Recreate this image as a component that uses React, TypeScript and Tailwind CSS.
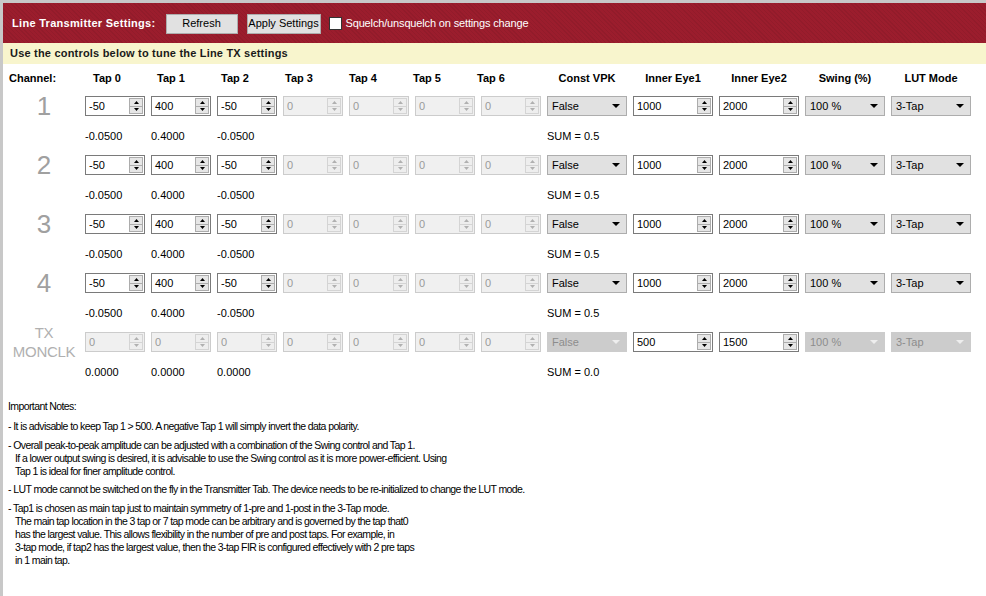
import React from "react";

const F = "font-['Liberation_Sans',Arial,sans-serif]";

function SpinArrows({ disabled }: { disabled?: boolean }) {
  const fill = disabled ? "#b0b0b0" : "#000000";
  return (
    <div
      className={`mr-[1px] w-[14px] h-[16px] flex flex-col border ${
        disabled ? "border-[#d4d4d4] bg-[#eeeeee]" : "border-[#acacac] bg-[#e6e6e6]"
      }`}
    >
      <div className="flex-1 flex items-center justify-center">
        <svg width="5" height="3" viewBox="0 0 5 3">
          <polygon points="2.5,0 5,3 0,3" fill={fill} />
        </svg>
      </div>
      <div className={`h-px ${disabled ? "bg-[#d4d4d4]" : "bg-[#acacac]"}`} />
      <div className="flex-1 flex items-center justify-center">
        <svg width="5" height="3" viewBox="0 0 5 3">
          <polygon points="0,0 5,0 2.5,3" fill={fill} />
        </svg>
      </div>
    </div>
  );
}

function Spin({ v, disabled, wide }: { v: string; disabled?: boolean; wide?: boolean }) {
  return (
    <div
      className={`${wide ? "w-[80px]" : "w-[60px]"} h-5 flex items-center border ${
        disabled ? "border-[#cccccc] bg-[#f0f0f0] text-[#9a9a9a]" : "border-[#7a7a7a] bg-white text-black"
      }`}
    >
      <span className="flex-1 pl-[3px] text-[11px] leading-none">{v}</span>
      <SpinArrows disabled={disabled} />
    </div>
  );
}

function Combo({ v, disabled }: { v: string; disabled?: boolean }) {
  return (
    <div
      className={`w-[80px] h-5 flex items-center justify-between border pl-[4px] pr-[6px] ${
        disabled ? "border-[#cccccc] bg-[#cccccc] text-[#8c8c8c]" : "border-[#adadad] bg-[#e1e1e1] text-black"
      }`}
    >
      <span className="text-[11px] leading-none">{v}</span>
      <svg width="8" height="4" viewBox="0 0 8 4">
        <polygon points="0,0 8,0 4,4" fill={disabled ? "#eeeeee" : "#000000"} />
      </svg>
    </div>
  );
}

type Ch = {
  label: React.ReactNode;
  taps: string[];
  enabledTaps: number;
  vpkDisabled?: boolean;
  eye1: string;
  eye2: string;
  values: string[];
  sum: string;
};

function Channel({ c }: { c: Ch }) {
  return (
    <div>
      <div className="flex h-5 items-center">
        <div className="w-[82px] h-5 flex items-center justify-center">{c.label}</div>
        <div className="flex gap-[6px]">
          {c.taps.map((t, i) => (
            <Spin key={i} v={t} disabled={i >= c.enabledTaps} />
          ))}
          <Combo v="False" disabled={c.vpkDisabled} />
          <Spin v={c.eye1} wide />
          <Spin v={c.eye2} wide />
          <Combo v="100 %" disabled={c.vpkDisabled} />
          <Combo v="3-Tap" disabled={c.vpkDisabled} />
        </div>
      </div>
      <div className="flex h-[39px] pt-[14px] pl-[82px] text-[11px] leading-[13px] text-black">
        {[0, 1, 2, 3, 4, 5, 6].map((i) => (
          <div key={i} className="w-[66px]">
            {c.values[i] ?? ""}
          </div>
        ))}
        <div>{c.sum}</div>
      </div>
    </div>
  );
}

const bigNum = (n: string) => (
  <span className="text-[26px] leading-5 text-[#a0a0a0]">{n}</span>
);

const channels: Ch[] = ["1", "2", "3", "4"].map((n) => ({
  label: bigNum(n),
  taps: ["-50", "400", "-50", "0", "0", "0", "0"],
  enabledTaps: 3,
  eye1: "1000",
  eye2: "2000",
  values: ["-0.0500", "0.4000", "-0.0500"],
  sum: "SUM = 0.5",
}));

channels.push({
  label: (
    <div className="flex flex-col items-center text-[15px] leading-[19px] text-[#b0b0b0] tracking-[-0.3px]">
      <span>TX</span>
      <span>MONCLK</span>
    </div>
  ),
  taps: ["0", "0", "0", "0", "0", "0", "0"],
  enabledTaps: 0,
  vpkDisabled: true,
  eye1: "500",
  eye2: "1500",
  values: ["0.0000", "0.0000", "0.0000"],
  sum: "SUM = 0.0",
});

const tapHeads = ["Tap 0", "Tap 1", "Tap 2", "Tap 3", "Tap 4", "Tap 5", "Tap 6"];
const rightHeads = ["Const VPK", "Inner Eye1", "Inner Eye2", "Swing (%)", "LUT Mode"];

export default function App() {
  return (
    <div className={`${F} w-[986px] h-[596px] bg-[#c8c8c8] pt-[3px] pl-[3px] overflow-hidden`}>
      <div className="w-full h-full bg-white">
        {/* Red header */}
        <div className="h-[40px] bg-[#9b1d2d] bg-[repeating-linear-gradient(45deg,rgba(0,0,0,0.06)_0px,rgba(0,0,0,0.06)_1px,transparent_1px,transparent_3px)] flex items-center pl-[9px] pt-[1px]">
          <span className="text-white font-bold text-[11px] tracking-[0.3px] mr-[10px]">Line Transmitter Settings:</span>
          <button className="w-[72px] h-5 bg-[#e1e1e1] border border-[#adadad] text-[11px] text-black leading-none mr-[9px]">
            Refresh
          </button>
          <button className="w-[74px] h-5 bg-[#e1e1e1] border border-[#adadad] text-[11px] text-black leading-none mr-[8px] whitespace-nowrap">
            Apply Settings
          </button>
          <span className="w-[13px] h-[13px] bg-white border border-[#333333] mr-[4px]" />
          <span className="text-white text-[11px] tracking-[-0.15px]">Squelch/unsquelch on settings change</span>
        </div>
        {/* Yellow bar */}
        <div className="h-[21px] bg-[#f8f5cd] flex items-center pl-[7px]">
          <span className="font-bold text-[11px] tracking-[0.2px] text-[#1a1a1a]">
            Use the controls below to tune the Line TX settings
          </span>
        </div>
        {/* Column heads */}
        <div className="h-[32px] flex pt-[7px] text-[11px] leading-[14px] font-bold text-black">
          <div className="w-[72px] pl-[6px]">Channel:</div>
          {tapHeads.map((h) => (
            <div key={h} className="w-[64px] text-center">
              {h}
            </div>
          ))}
          <div className="w-[24px]" />
          {rightHeads.map((h) => (
            <div key={h} className="w-[86px] text-center pr-[6px]">
              {h}
            </div>
          ))}
        </div>
        {/* Channels */}
        {channels.map((c, i) => (
          <Channel key={i} c={c} />
        ))}
        {/* Notes */}
        <div className="mt-[9px] pl-[5px] text-[10.5px] tracking-[-0.6px] leading-[13px] text-black flex flex-col gap-[6px]">
          <div>Important Notes:</div>
          <div className="pt-[1px]">- It is advisable to keep Tap 1 &gt; 500. A negative Tap 1 will simply invert the data polarity.</div>
          <div>
            <div>- Overall peak-to-peak amplitude can be adjusted with a combination of the Swing control and Tap 1.</div>
            <div className="pl-[7px]">
              If a lower output swing is desired, it is advisable to use the Swing control as it is more power-efficient. Using
            </div>
            <div className="pl-[7px]">Tap 1 is ideal for finer amplitude control.</div>
          </div>
          <div className="-mt-[1px]">
            - LUT mode cannot be switched on the fly in the Transmitter Tab. The device needs to be re-initialized to change the LUT mode.
          </div>
          <div>
            <div>- Tap1 is chosen as main tap just to maintain symmetry of 1-pre and 1-post in the 3-Tap mode.</div>
            <div className="pl-[7px]">
              The main tap location in the 3 tap or 7 tap mode can be arbitrary and is governed by the tap that0
            </div>
            <div className="pl-[7px]">
              has the largest value. This allows flexibility in the number of pre and post taps. For example, in
            </div>
            <div className="pl-[7px]">
              3-tap mode, if tap2 has the largest value, then the 3-tap FIR is configured effectively with 2 pre taps
            </div>
            <div className="pl-[7px]">in 1 main tap.</div>
          </div>
        </div>
      </div>
    </div>
  );
}
